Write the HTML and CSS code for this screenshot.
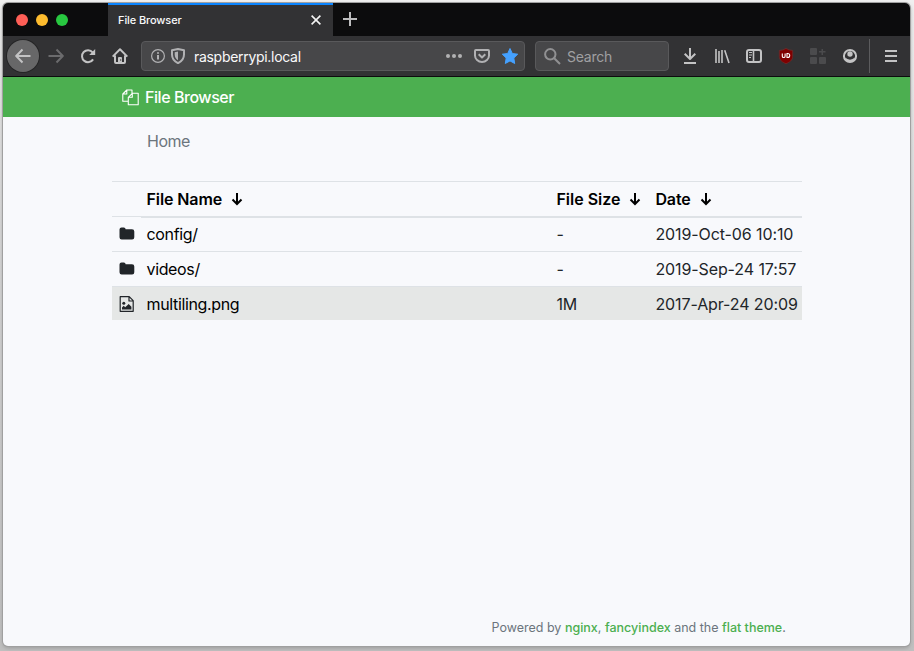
FILE: index.html
```html
<!DOCTYPE html>
<html lang="en">
<head>
<meta charset="utf-8">
<title>File Browser</title>
<link rel="stylesheet" href="styles.css">
</head>
<body>
<div class="window">
  <header class="tabs">
    <div class="lights"><i class="red"></i><i class="yellow"></i><i class="green"></i></div>
    <div class="tab"><span>File Browser</span>
      <svg width="12" height="12" viewBox="0 0 12 12"><path d="M1.600 1.600l8.800 8.800M10.400 1.600l-8.800 8.800" stroke="#f4f4f4" stroke-width="1.600" fill="none"/></svg>
    </div>
    <svg class="plus" width="14" height="14" viewBox="0 0 14 14"><path d="M7 0v14M0 7h14" stroke="#bdbdbe" stroke-width="2" fill="none"/></svg>
  </header>
  <nav class="toolbar">
    <div class="btn back"><svg width="16" height="16" viewBox="0 0 16 16"><path d="M15.500 8H1.300M7.500 1.500L1.200 8l6.300 6.500" class="ln"/></svg></div>
    <div class="btn dim"><svg width="16" height="16" viewBox="0 0 16 16"><path d="M.5 8h14.200M8.500 1.500L14.800 8l-6.300 6.500" class="ln"/></svg></div>
    <div class="btn"><svg width="16" height="16" viewBox="0 0 16 16"><path d="M13.100 11.400A6 6 0 1 1 12.600 4.300" class="ln"/><path d="M15.200 1v6H9.200z" fill="currentColor"/></svg></div>
    <div class="btn"><svg width="16" height="16" viewBox="0 0 16 16"><path d="M.7 8.600L8 1.300l7.300 7.300M3 7.500V14q0 1 1 1h8q1 0 1-1V7.500" class="ln"/><path d="M6 15v-5q0-1 1-1h2q1 0 1 1v5z" fill="currentColor"/><circle cx="8.700" cy="12" r=".7" fill="#38383a"/></svg></div>
    <div class="field url">
      <svg width="14" height="14" viewBox="0 0 14 14"><circle cx="7" cy="7" r="6.400" class="thin"/><path d="M7 6v4.500M7 3.300v1.500" class="ln"/></svg>
      <svg class="shield" width="14" height="16" viewBox="0 0 14 16"><path d="M7 1L13 2.300v4.200c0 4-2.200 6.800-6 8.700C3.200 13.300 1 10.500 1 6.500V2.300z" class="ln"/><path d="M7 3.600v8.700C4.800 10.900 3.700 9 3.700 6.500V4.300z" fill="currentColor"/></svg>
      <span class="address">raspberrypi.local</span>
      <svg width="16" height="16" viewBox="0 0 16 16" fill="currentColor"><circle cx="2" cy="8" r="2"/><circle cx="8" cy="8" r="2"/><circle cx="14" cy="8" r="2"/></svg>
      <svg class="gap" width="16" height="16" viewBox="0 0 16 16"><path d="M1.900 2h12.200q.9 0 .9.900V7.500a7 6.500 0 0 1-14 0V2.900Q1 2 1.900 2z" class="ln"/><path d="M4.700 6.300L8 9.500l3.300-3.200" class="ln"/></svg>
      <svg class="gap" width="18" height="18" viewBox="0 0 18 18"><path d="M9 1.500l2.300 5 5.400.7-3.900 3.800.9 5.500L9 13.900l-4.700 2.600.9-5.500-3.900-3.800 5.400-.7z" fill="#45a1ff" stroke="#45a1ff" stroke-width="1" stroke-linejoin="round"/></svg>
    </div>
    <div class="field search">
      <svg width="17" height="17" viewBox="0 0 17 17"><circle cx="6.300" cy="6.300" r="5.200" class="ln"/><path d="M10.200 10.200l5.800 5.800" class="ln"/></svg>
      <span>Search</span>
    </div>
    <div class="btn"><svg width="16" height="16" viewBox="0 0 16 16"><path d="M8 0v10.500M2.700 5.800L8 11l5.300-5.200M2 15h12" class="ln"/></svg></div>
    <div class="btn"><svg width="16" height="16" viewBox="0 0 16 16"><path d="M2 1v14M5 3v12M8 2v13M10.700 2.200L15 15" class="ln books"/></svg></div>
    <div class="btn"><svg width="16" height="16" viewBox="0 0 16 16"><rect x="1" y="2" width="14" height="12" rx="2" class="ln"/><path d="M7.500 2v12" class="ln books"/><path d="M3 4.500h3M3 7h3M3 9.500h2" class="thin"/></svg></div>
    <div class="btn"><svg width="16" height="16" viewBox="0 0 16 16"><path d="M8 .4q3 2 6.700 2V8.400c0 3.800-3.200 5.900-6.700 7.300C4.500 14.300 1.300 12.200 1.300 8.400V2.400Q5 2.400 8 .4z" fill="#800000" stroke="#6e3030" stroke-width=".7"/><path d="M4.300 5.500v2.700q0 1.300 1.400 1.300t1.400-1.300V5.500M9 5.500v4h.7q2 0 2-2t-2-2z" fill="none" stroke="#fff" stroke-width="1.100"/></svg></div>
    <div class="btn faint"><svg width="16" height="16" viewBox="0 0 16 16" fill="currentColor"><rect x="0" y="0" width="7" height="7" rx="1"/><rect x="0" y="9" width="7" height="7" rx="1"/><rect x="9" y="9" width="7" height="7" rx="1"/><path d="M11.500 1h1.500v2h2.500v1.500H13V7h-1.500V4.500H9V3h2.500z"/></svg></div>
    <div class="btn"><svg width="16" height="16" viewBox="0 0 16 16"><circle cx="8" cy="8" r="6.100" class="ln"/><circle cx="8" cy="6" r="2.700" fill="currentColor"/><path d="M3 9.500Q8 13.800 13 9.500L12 13Q8 15.500 4 13z" fill="currentColor"/></svg></div>
    <div class="sep"></div>
    <div class="btn"><svg width="16" height="16" viewBox="0 0 16 16"><path d="M2 3h12M2 8h12M2 13h12" class="ln"/></svg></div>
  </nav>
  <div class="brand">
    <svg width="17" height="17" viewBox="0 0 17 17" fill="none" stroke="#fff" stroke-width="1.100" stroke-linejoin="round"><path d="M6 12.200H.8V5L4.800 1H10v3.500M4.800 1v4H.8M6.300 15.800V8.300l4-4h5.900v11.500zM10.300 4.300v4h-4"/></svg>
    <span>File Browser</span>
  </div>
  <main>
    <div class="crumb">Home</div>
    <table>
      <colgroup><col class="c-icon"><col class="c-name"><col class="c-size"><col></colgroup>
      <thead><tr><th></th>
        <th>File Name<svg class="arrow" width="12" height="14" viewBox="0 0 12 14"><path d="M6 1v11M1.500 7.500L6 12l4.500-4.500"/></svg></th>
        <th>File Size<svg class="arrow" width="12" height="14" viewBox="0 0 12 14"><path d="M6 1v11M1.500 7.500L6 12l4.500-4.500"/></svg></th>
        <th>Date<svg class="arrow" width="12" height="14" viewBox="0 0 12 14"><path d="M6 1v11M1.500 7.500L6 12l4.500-4.500"/></svg></th></tr></thead>
      <tbody>
        <tr><td><svg width="16" height="16" viewBox="0 0 16 16"><path d="M.5 3.500q0-2 2-2h2.300q1.800 0 1.800 1.700h6.400q2.300 0 2.300 2.200v5.800q0 2.200-2.200 2.200H2.700Q.5 13.400.5 11.200z" fill="#212529"/></svg></td><td class="name">config/</td><td>-</td><td class="date">2019-Oct-06 10:10</td></tr>
        <tr><td><svg width="16" height="16" viewBox="0 0 16 16"><path d="M.5 3.500q0-2 2-2h2.300q1.800 0 1.800 1.700h6.400q2.300 0 2.300 2.200v5.800q0 2.200-2.200 2.200H2.700Q.5 13.400.5 11.200z" fill="#212529"/></svg></td><td class="name">videos/</td><td>-</td><td class="date">2019-Sep-24 17:57</td></tr>
        <tr class="active"><td><svg width="16" height="16" viewBox="0 0 16 16"><path d="M1.200.7h9l4 4v10.600h-13zM10 .7v4.300h4.300" fill="none" stroke="#212529" stroke-width="1.200" stroke-linejoin="round"/><circle cx="4.800" cy="7.300" r="1.500" fill="#212529"/><path d="M3 13.500v-2l1.700-1.700 1.500 1.500L9.700 8l2.700 2.700v2.800z" fill="#212529"/></svg></td><td class="name">multiling.png</td><td>1M</td><td class="date">2017-Apr-24 20:09</td></tr>
      </tbody>
    </table>
  </main>
  <footer>Powered by <a>nginx</a>, <a>fancyindex</a> and the <a>flat theme</a>.</footer>
</div>
</body>
</html>
```
FILE: styles.css
```css
* { box-sizing: border-box; }
body {
  margin: 0;
  height: 651px;
  padding: 3px 4px 5px 3px;
  overflow: hidden;
  background: linear-gradient(#f0f0f0, #d6d6d6 40%, #c0c0c0);
  font-family: Inter, "Liberation Sans", sans-serif;
}
svg { display: block; flex: none; }
.ln { fill: none; stroke: currentColor; stroke-width: 2; stroke-linejoin: round; }
.books { stroke-width: 1.6; }
.thin { fill: none; stroke: currentColor; stroke-width: 1.2; }
.window {
  display: flex;
  flex-direction: column;
  height: 643px;
  overflow: hidden;
  border-radius: 5px;
  background: #f8f9fc;
  box-shadow: 0 0 0 1px #a0a0a0, 0 2px 4px #999;
}
.tabs { display: flex; height: 33px; background: #0c0c0d; flex: none; }
.lights { width: 105px; display: flex; gap: 8px; padding: 11px 0 0 13px; }
.lights i { width: 12px; height: 12px; border-radius: 50%; }
.red { background: #ff5f57; }
.yellow { background: #febc2e; }
.green { background: #28c840; }
.tab {
  width: 225px;
  display: flex;
  align-items: center;
  justify-content: space-between;
  padding: 0 11px 1px 10px;
  background: #323234;
  border-top: 2px solid #0a84ff;
  color: #f9f9fa;
  font-size: 11px;
  font-weight: 500;
  letter-spacing: -.1px;
}
.plus { margin: 9px 0 0 10px; }
.toolbar {
  display: flex;
  align-items: center;
  flex: none;
  height: 41px;
  padding: 0 3px 0 4px;
  background: #323234;
  border-bottom: 1px solid #0c0c0d;
  color: #c3c3c4;
}
.btn { width: 32px; height: 32px; display: grid; place-items: center; flex: none; }
.back { border-radius: 50%; background: #676768; box-shadow: 0 0 0 1px #252526; margin-right: 1px; }
.dim { color: #6b6b6d; }
.faint { color: #4b4b4d; }
.field {
  display: flex;
  align-items: center;
  height: 30px;
  border: 1px solid #59595b;
  border-radius: 4px;
  background: #474749;
  flex: none;
}
.url { width: 384px; margin: 0 10px 0 5px; padding: 0 5px 0 9px; color: #b1b1b3; }
.shield { margin: 0 9px 0 6px; }
.address { flex: 1; color: #f9f9fa; font-size: 14px; padding-top: 1px; letter-spacing: -.3px; }
.gap { margin-left: 12px; }
.gap + .gap { margin-left: 11px; }
.search { width: 134px; margin-right: 5px; padding-left: 8px; gap: 6px; color: #a0a0a2; font-size: 14px; letter-spacing: -.25px; }
.search span { padding-top: 1px; }
.search svg { color: #909092; }
.sep { width: 1px; height: 34px; margin: 0 5px 0 3px; background: #5c5c5e; }
.brand {
  display: flex;
  align-items: center;
  flex: none;
  gap: 6px;
  height: 40px;
  padding-left: 119px;
  background: #4caf50;
  color: #fff;
  font-size: 16px;
  font-weight: 500;
  letter-spacing: -.45px;
}
main { flex: 1; padding-left: 109px; font-size: 16px; }
.crumb { height: 64px; padding: 12px 0 0 35px; line-height: 24px; color: #6c757d; letter-spacing: -.5px; }
table { width: 690px; table-layout: fixed; border-spacing: 0; color: #212529; line-height: 24px; }
.c-icon { width: 29px; }
.c-name { width: 410px; }
.c-size { width: 99px; }
th, td { padding: 5px 0 5px 5px; height: 35px; text-align: left; border-top: 1px solid #dee2e6; white-space: nowrap; }
th { height: 37px; padding-bottom: 5px; border-bottom: 2px solid #dee2e6; color: #000; font-weight: 600; letter-spacing: -.1px; }
th:first-child {
  border-bottom: 0;
  padding: 0;
  background: linear-gradient(#dee2e6, #dee2e6) 0 34px / 100% 1px no-repeat;
}
th:nth-child(3) { letter-spacing: 0; }
td { letter-spacing: -.25px; }
tbody tr:first-child td { border-top: 0; height: 33px; padding-top: 4px; }
td:first-child { padding-left: 7px; }
td:first-child svg { margin-top: -1px; }
td.name { color: #000; letter-spacing: -.35px; }
th:nth-child(2), td.name { padding-left: 5.5px; }
th:nth-child(n+3), td:nth-child(n+3) { padding-left: 5.4px; }
td.date { letter-spacing: -.1px; }
.active td { background: #e5e7e6; height: 34px; padding-bottom: 4px; }
.arrow { display: inline-block; margin-left: 9px; vertical-align: -1px; fill: none; stroke: #000; stroke-width: 2; }
footer { height: 27px; padding-left: 488.5px; color: #6c757d; font-size: 12.5px; line-height: 17px; }
footer a { color: #4caf50; font-weight: 500; }
```
